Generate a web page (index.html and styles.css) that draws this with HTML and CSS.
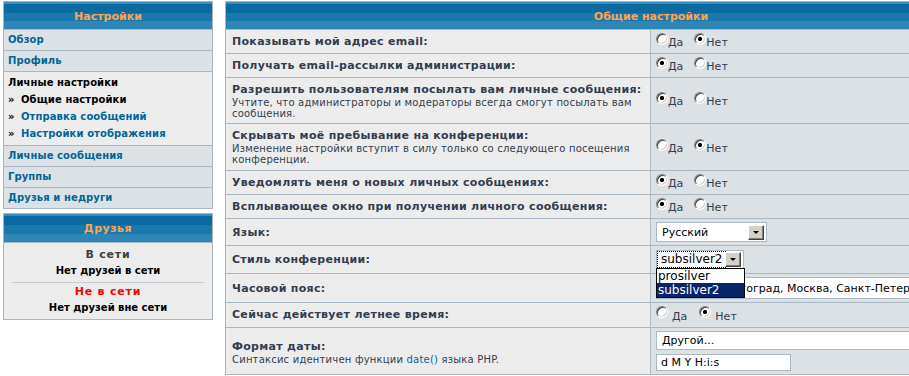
FILE: index.html
```html
<!DOCTYPE html>
<html lang="ru">
<head>
    <meta charset="UTF-8">
    <title>Общие настройки</title>
    <link rel="stylesheet" href="styles.css">
</head>
<body>
    <div class="page">
        <div class="side">
            <div class="panel">
                <div class="cap">Настройки</div>
                <a class="nav" href="#">Обзор</a>
                <a class="nav" href="#">Профиль</a>
                <div class="group">
                    <div class="group-title">Личные настройки</div>
                    <div class="sub current"><span class="arr">»</span>Общие настройки</div>
                    <a class="sub" href="#"><span class="arr">»</span>Отправка сообщений</a>
                    <a class="sub" href="#"><span class="arr">»</span>Настройки отображения</a>
                </div>
                <a class="nav" href="#">Личные сообщения</a>
                <a class="nav" href="#">Группы</a>
                <a class="nav" href="#">Друзья и недруги</a>
            </div>

            <div class="panel friends">
                <div class="cap cap-tall">Друзья</div>
                <div class="friends-body">
                    <div class="status">В сети</div>
                    <div class="nobody">Нет друзей в сети</div>
                    <div class="sep"></div>
                    <div class="status offline">Не в сети</div>
                    <div class="nobody">Нет друзей вне сети</div>
                </div>
            </div>
        </div>

        <div class="main">
            <div class="cap cap-main">Общие настройки</div>

            <div class="label"><b>Показывать мой адрес email:</b></div>
            <div class="value">
                <label class="opt"><input class="radio" type="radio" name="viewemail"><span>Да</span></label>
                <label class="opt"><input class="radio" type="radio" name="viewemail" checked><span>Нет</span></label>
            </div>

            <div class="label"><b>Получать email-рассылки администрации:</b></div>
            <div class="value">
                <label class="opt"><input class="radio" type="radio" name="massemail" checked><span>Да</span></label>
                <label class="opt"><input class="radio" type="radio" name="massemail"><span>Нет</span></label>
            </div>

            <div class="label">
                <b>Разрешить пользователям посылать вам личные сообщения:</b>
                <p class="explain">Учтите, что администраторы и модераторы всегда смогут посылать вам сообщения.</p>
            </div>
            <div class="value">
                <label class="opt"><input class="radio" type="radio" name="allowpm" checked><span>Да</span></label>
                <label class="opt"><input class="radio" type="radio" name="allowpm"><span>Нет</span></label>
            </div>

            <div class="label label-tall">
                <b>Скрывать моё пребывание на конференции:</b>
                <p class="explain">Изменение настройки вступит в силу только со следующего посещения конференции.</p>
            </div>
            <div class="value">
                <label class="opt"><input class="radio" type="radio" name="hideonline"><span>Да</span></label>
                <label class="opt"><input class="radio" type="radio" name="hideonline" checked><span>Нет</span></label>
            </div>

            <div class="label"><b>Уведомлять меня о новых личных сообщениях:</b></div>
            <div class="value">
                <label class="opt"><input class="radio" type="radio" name="notifypm" checked><span>Да</span></label>
                <label class="opt"><input class="radio" type="radio" name="notifypm"><span>Нет</span></label>
            </div>

            <div class="label"><b>Всплывающее окно при получении личного сообщения:</b></div>
            <div class="value">
                <label class="opt"><input class="radio" type="radio" name="popuppm" checked><span>Да</span></label>
                <label class="opt"><input class="radio" type="radio" name="popuppm"><span>Нет</span></label>
            </div>

            <div class="label label-mid"><b>Язык:</b></div>
            <div class="value">
                <div class="select select-lang"><span class="select-text">Русский</span><span class="drop"></span></div>
            </div>

            <div class="label label-mid"><b>Стиль конференции:</b></div>
            <div class="value value-style">
                <div class="select select-style">
                    <span class="select-text focused">subsilver2</span><span class="drop"></span>
                    <ul class="droplist">
                        <li>prosilver</li>
                        <li class="hover">subsilver2</li>
                    </ul>
                </div>
            </div>

            <div class="label label-mid"><b>Часовой пояс:</b></div>
            <div class="value">
                <div class="select select-wide select-tz"><span class="select-text">[UTC + 3] Волгоград, Москва, Санкт-Петербург</span></div>
            </div>

            <div class="label"><b>Сейчас действует летнее время:</b></div>
            <div class="value">
                <label class="opt opt-spaced"><input class="radio" type="radio" name="dst"><span>Да</span></label>
                <label class="opt opt-spaced"><input class="radio" type="radio" name="dst" checked><span>Нет</span></label>
            </div>

            <div class="label label-date">
                <b>Формат даты:</b>
                <p class="explain">Синтаксис идентичен функции <a href="#">date()</a> языка PHP.</p>
            </div>
            <div class="value value-stack">
                <div class="select select-wide select-date"><span class="select-text">Другой...</span></div>
                <input class="text-input" type="text" value="d M Y H:i:s">
            </div>
        </div>
    </div>
</body>
</html>
```

FILE: styles.css
```css
* {
    box-sizing: border-box;
}

html {
    overflow: hidden;
}

body {
    margin: 0;
    background: #fff;
    font-family: "DejaVu Sans", Verdana, sans-serif;
    font-size: 11px;
    color: #323D4F;
}

a {
    color: #006597;
    text-decoration: none;
}

.page {
    display: flex;
    align-items: flex-start;
    gap: 12px;
    padding: 1px 0 0 3px;
}

/* left column */

.side {
    width: 210px;
    flex: none;
    display: flex;
    flex-direction: column;
    gap: 4px;
}

.panel {
    display: flex;
    flex-direction: column;
    gap: 1px;
    background: #A9B8C2;
    border: 1px solid #A9B8C2;
}

.cap {
    height: 27px;
    line-height: 29px;
    background: linear-gradient(#3a8cba 0 2px, #0b6aa2 2px 11px, #1a78ad 11px 19px, #2e86b6 19px);
    color: #FFA34F;
    font-weight: bold;
    font-size: 11px;
    text-align: center;
}

.cap-tall {
    height: 28px;
    line-height: 30px;
    letter-spacing: 0.5px;
    background: linear-gradient(#3a8cba 0 2px, #0b6aa2 2px 11px, #1a78ad 11px 20px, #2e86b6 20px);
}

.nav {
    display: block;
    height: 20px;
    line-height: 20px;
    padding-left: 4px;
    background: #DCE1E5;
    font-size: 10px;
    font-weight: bold;
    letter-spacing: 0.1px;
}

.group {
    background: #ECECEC;
    padding: 2px 4px 3px;
    font-size: 10px;
    font-weight: bold;
    line-height: 17px;
    letter-spacing: 0.1px;
}

.group-title,
.current {
    color: #000;
}

.sub {
    display: block;
}

.arr {
    display: inline-block;
    width: 13px;
    color: #000;
}

.friends-body {
    background: #ECECEC;
    text-align: center;
    padding: 4px 4px 3px;
    font-size: 10px;
    font-weight: bold;
    color: #000;
}

.status {
    font-size: 11px;
    line-height: 16px;
    color: #3a4040;
    letter-spacing: 0.8px;
}

.status.offline {
    color: #FF0000;
}

.nobody {
    line-height: 16px;
}

.sep {
    height: 1px;
    background: #C4CCD2;
    margin: 3px 4px 1px;
}

/* main settings table */

.main {
    width: 852px;
    flex: none;
    display: grid;
    grid-template-columns: 424px 1fr;
    gap: 1px;
    background: #A9B8C2;
    border: 1px solid #A9B8C2;
}

.cap-main {
    grid-column: 1 / -1;
}

.label {
    background: #ECECEC;
    padding: 4px 6px;
    line-height: 15px;
    letter-spacing: 0.3px;
}

.label-tall {
    padding-bottom: 5px;
}

.label-mid {
    display: flex;
    align-items: center;
}

.label-date {
    padding-top: 11px;
}

.explain {
    margin: 0;
    font-size: 10px;
    line-height: 11px;
    letter-spacing: 0.2px;
}

.value {
    background: #DCE1E5;
    padding: 3px 5px;
    display: flex;
    align-items: center;
}

.value-style {
    padding: 4px 5px;
}

.value-stack {
    flex-direction: column;
    align-items: flex-start;
    gap: 4px;
}

.opt {
    display: inline-flex;
    align-items: flex-start;
    margin-right: 11px;
    color: #323D4F;
}

.opt span {
    padding-top: 3px;
    line-height: 14px;
}

.opt-spaced span {
    margin-left: 4px;
    margin-right: 1px;
    padding-top: 4px;
}

.radio {
    -webkit-appearance: none;
    appearance: none;
    width: 12px;
    height: 12px;
    margin: 0;
    border-radius: 50%;
    border: 1px solid;
    border-color: #808080 #fff #fff #808080;
    box-shadow: inset 1px 1px 0 #404040, inset -1px -1px 0 #d4d0c8;
    background: #fff;
}

.radio:checked {
    background: radial-gradient(circle, #000 0 1.8px, #fff 2.4px);
}

.select {
    position: relative;
    display: flex;
    align-items: center;
    background: #fff;
    border: 1px solid #A9B8C2;
    color: #000;
    white-space: nowrap;
}

.select-text {
    padding-left: 5px;
}

.select-lang {
    width: 111px;
    height: 20px;
    justify-content: space-between;
    padding-right: 2px;
}

.select-style {
    width: 88px;
    height: 19px;
    font-size: 12px;
    padding: 1px 2px 1px 1px;
    justify-content: space-between;
}

.select-style .select-text {
    padding: 0 3px;
    line-height: 15px;
}

.focused {
    outline: 1px dotted #000;
}

.drop {
    width: 16px;
    height: 15px;
    background: #d4d0c8;
    border: 1px solid;
    border-color: #fff #404040 #404040 #fff;
    box-shadow: inset -1px -1px 0 #808080;
    position: relative;
}

.drop::after {
    content: "";
    position: absolute;
    left: 4px;
    top: 5px;
    border-left: 3px solid transparent;
    border-right: 3px solid transparent;
    border-top: 3px solid #000;
}

.droplist {
    position: absolute;
    left: -1px;
    top: 17px;
    width: 89px;
    margin: 0;
    padding: 0;
    list-style: none;
    background: #fff;
    border: 1px solid #000;
    z-index: 2;
}

.droplist li {
    height: 14px;
    line-height: 14px;
    padding-left: 1px;
}

.droplist .hover {
    background: #0A246A;
    color: #fff;
}

.select-wide {
    width: 100%;
}

.select-tz {
    height: 22px;
}

.select-date {
    height: 19px;
}

.text-input {
    width: 135px;
    height: 17px;
    padding: 0 0 0 4px;
    border: 1px solid #A9B8C2;
    font-family: inherit;
    font-size: 11px;
    color: #000;
    background: #fff;
}
```
